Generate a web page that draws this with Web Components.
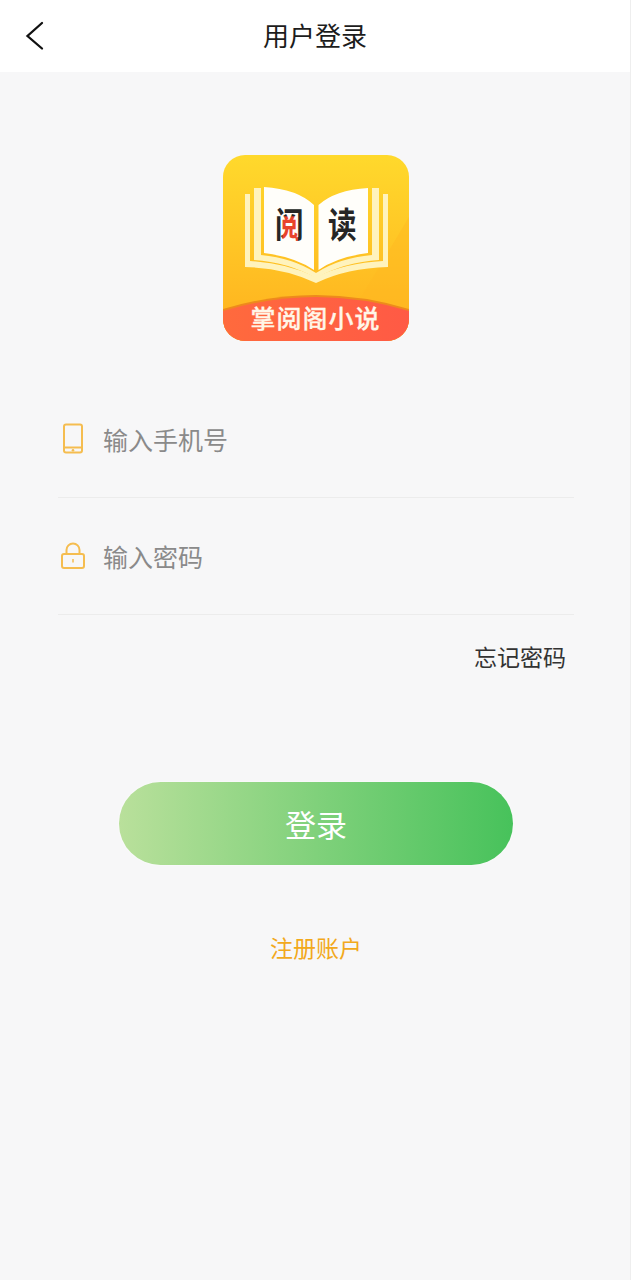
<!DOCTYPE html>
<html lang="zh">
<head>
<meta charset="utf-8">
<title>用户登录</title>
<style>
  html, body { margin: 0; padding: 0; }
  body { background: #f7f7f8; font-family: "Noto Sans CJK SC", "Noto Sans", sans-serif; }
</style>
</head>
<body>
<login-page></login-page>

<script>
class TopBar extends HTMLElement {
  connectedCallback() {
    const shadow = this.attachShadow({ mode: 'open' });
    shadow.innerHTML = `
      <style>
        :host { display: flex; height: 72px; box-sizing: border-box; padding-bottom: 2px; background: #fff; align-items: center; justify-content: center; position: relative; }
        .title { font-size: 26px; color: #1c1c1c; line-height: 36px; }
        svg { position: absolute; left: 24px; top: 20px; }
      </style>
      <svg width="22" height="32" viewBox="0 0 22 32" fill="none">
        <path d="M18 3 L3.5 16 L18 28.5" stroke="#111" stroke-width="2.3" stroke-linecap="round"/>
      </svg>
      <div class="title"><slot></slot></div>`;
  }
}

class AppLogo extends HTMLElement {
  connectedCallback() {
    const shadow = this.attachShadow({ mode: 'open' });
    shadow.innerHTML = `
      <style>
        :host { display: block; width: 186px; height: 186px; }
        svg { display: block; }
        text { font-family: "Noto Sans CJK SC", sans-serif; }
      </style>
      <svg width="186" height="186" viewBox="0 0 186 186">
        <defs>
          <linearGradient id="bg" x1="0" y1="0" x2="0" y2="1">
            <stop offset="0" stop-color="#ffd92c"/>
            <stop offset="1" stop-color="#ffb01e"/>
          </linearGradient>
          <linearGradient id="band" x1="0" y1="0" x2="1" y2="0">
            <stop offset="0" stop-color="#ff6a3d"/>
            <stop offset="1" stop-color="#ff5a45"/>
          </linearGradient>
          <!-- tile coordinates are local to the scaled 阅 glyph, shifted down 40 -->
          <pattern id="ink" patternUnits="userSpaceOnUse" width="186" height="186" patternTransform="translate(0 -40)">
            <rect width="186" height="186" fill="#262626"/>
            <rect x="8" y="21" width="17" height="26" fill="#e8432c"/>
          </pattern>
          <clipPath id="round"><rect width="186" height="186" rx="22"/></clipPath>
        </defs>
        <g clip-path="url(#round)">
          <rect width="186" height="186" fill="url(#bg)"/>
          <path d="M112 186 L186 62 L186 186 Z" fill="#ffb822" opacity=".45"/>
          <path d="M22 39 L27 39 L27 106 Q64 108 93 122 Q122 108 160 106 L160 39 L165 39 L165 112 Q124 113 93 128 Q62 113 22 112 Z" fill="#fff3bd"/>
          <path d="M31 33 L38 33 L38 100 Q70 103 93 118 Q116 103 149 100 L149 33 L156 33 L156 105 Q122 107 93 123 Q64 107 31 105 Z" fill="#fff3bd"/>
          <path d="M41 32 Q74 34 91 50 L91 115 Q72 102 41 98 Z" fill="#fffefa"/>
          <path d="M95.500 50 Q112 35 145 33 L145 98 Q114 102 95.500 115 Z" fill="#fffefa"/>
          <text transform="translate(52 83) scale(.92 1.14)" font-size="31" font-weight="700" fill="url(#ink)">阅</text>
          <text transform="translate(105 83) scale(.92 1.14)" font-size="31" font-weight="700" fill="#262626">读</text>
          <path d="M0 154 Q93 126 186 154 L186 186 L0 186 Z" fill="#ee8a1c"/>
          <path d="M0 156 Q93 128 186 156 L186 186 L0 186 Z" fill="url(#band)"/>
          <text x="92.500" y="173" text-anchor="middle" font-size="25" font-weight="500" letter-spacing="1" fill="#fff6e8" stroke="#fff6e8" stroke-width=".3">掌阅阁小说</text>
        </g>
      </svg>`;
  }
}

class FormField extends HTMLElement {
  connectedCallback() {
    const shadow = this.attachShadow({ mode: 'open' });
    const icons = {
      phone: `<svg width="26" height="34" viewBox="0 0 26 34" fill="none" stroke="#f5bd50" stroke-width="2">
          <rect x="3" y="2.500" width="18" height="28" rx="2"/><path d="M3 25.500 H21"/><circle cx="12" cy="28.200" r="1.300" fill="#f5bd50" stroke="none"/></svg>`,
      lock: `<svg width="26" height="34" viewBox="0 0 26 34" fill="none" stroke="#f5bd50" stroke-width="2">
          <rect x="1" y="15" width="22" height="14" rx="2"/><path d="M5.500 15 V11 A6.500 6.500 0 0 1 18.500 11 V15"/><path d="M12 20 V23.500" stroke-width="1.500"/></svg>`
    };
    shadow.innerHTML = `
      <style>
        :host { display: flex; height: 117px; box-sizing: border-box; padding: 0 0 0 3px; align-items: center; gap: 17px; border-bottom: 1px solid #ececec; }
        svg { display: block; flex: none; }
        .hint { font-size: 25px; color: #8a8a8a; line-height: 34px; margin-left: -1px; }
      </style>
      ${icons[this.getAttribute('icon')]}
      <div class="hint"><slot></slot></div>`;
  }
}

class LoginButton extends HTMLElement {
  connectedCallback() {
    const shadow = this.attachShadow({ mode: 'open' });
    shadow.innerHTML = `
      <style>
        :host { display: flex; width: 394px; height: 83px; border-radius: 42px; align-items: center; justify-content: center;
                background: linear-gradient(90deg, #b9e09b, #47c25b); color: #fff; font-size: 31px; box-shadow: 0 0 3px rgba(255,255,255,.8); }
      </style>
      <slot></slot>`;
  }
}

class LoginPage extends HTMLElement {
  connectedCallback() {
    const shadow = this.attachShadow({ mode: 'open' });
    shadow.innerHTML = `
      <style>
        :host { display: block; min-height: 1280px; background: #f7f7f8; border-right: 1px solid #eeeeee; box-sizing: border-box; width: 631px; }
        .logo { display: flex; justify-content: center; padding: 83px 0 0 2px; }
        .form { margin: 40px 56px 0 58px; }
        .forgot { text-align: right; font-size: 23px; color: #333; line-height: 34px; padding: 24px 8px 0 0; }
        .submit { display: flex; justify-content: center; margin-top: 109px; padding-left: 2px; }
        .register { text-align: center; font-size: 23px; color: #f2a91c; line-height: 34px; margin-top: 65px; padding-left: 2px; }
      </style>
      <top-bar>用户登录</top-bar>
      <div class="logo"><app-logo></app-logo></div>
      <div class="form">
        <form-field icon="phone">输入手机号</form-field>
        <form-field icon="lock">输入密码</form-field>
        <div class="forgot">忘记密码</div>
      </div>
      <div class="submit"><login-button>登录</login-button></div>
      <div class="register">注册账户</div>`;
  }
}

customElements.define('top-bar', TopBar);
customElements.define('app-logo', AppLogo);
customElements.define('form-field', FormField);
customElements.define('login-button', LoginButton);
customElements.define('login-page', LoginPage);
</script>
</body>
</html>
